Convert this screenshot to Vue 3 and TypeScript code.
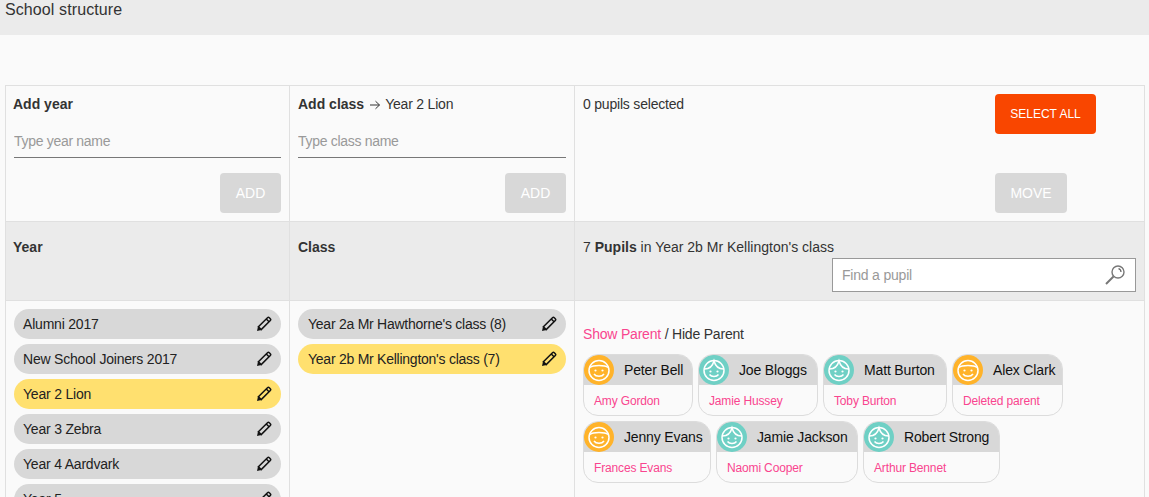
<script setup lang="ts">
const years = [
  { name: 'Alumni 2017' },
  { name: 'New School Joiners 2017' },
  { name: 'Year 2 Lion', active: true },
  { name: 'Year 3 Zebra' },
  { name: 'Year 4 Aardvark' },
  { name: 'Year 5' },
]
const classes = [
  { name: "Year 2a Mr Hawthorne's class (8)" },
  { name: "Year 2b Mr Kellington's class (7)", active: true },
]
const rows = [
  [
    { name: 'Peter Bell', parent: 'Amy Gordon', kind: 'boy', width: 110 },
    { name: 'Joe Bloggs', parent: 'Jamie Hussey', kind: 'girl', width: 120 },
    { name: 'Matt Burton', parent: 'Toby Burton', kind: 'girl', width: 124 },
    { name: 'Alex Clark', parent: 'Deleted parent', kind: 'boy', width: 111 },
  ],
  [
    { name: 'Jenny Evans', parent: 'Frances Evans', kind: 'boy', width: 128 },
    { name: 'Jamie Jackson', parent: 'Naomi Cooper', kind: 'girl', width: 142 },
    { name: 'Robert Strong', parent: 'Arthur Bennet', kind: 'girl', width: 137 },
  ],
]
</script>

<template>
  <div class="page">
    <header class="title">School structure</header>
    <section class="board">
      <div class="cell add">
        <div class="line"><b class="first-label">Add year</b></div>
        <input class="text-input" placeholder="Type year name" />
        <div class="actions"><button class="btn off">ADD</button></div>
      </div>
      <div class="cell add">
        <div class="line">
          <b>Add class</b>
          <svg class="arrow" viewBox="0 0 12 10" width="12" height="10"><path d="M1 5h9.500M6.500 1.200 10.500 5 6.500 8.800" fill="none" stroke="#333" stroke-width="1" /></svg>
          <span>Year 2 Lion</span>
        </div>
        <input class="text-input" placeholder="Type class name" />
        <div class="actions"><button class="btn off">ADD</button></div>
      </div>
      <div class="cell add move">
        <div class="line">0 pupils selected</div>
        <div class="move-buttons">
          <button class="btn select">SELECT ALL</button>
          <button class="btn off wide">MOVE</button>
        </div>
      </div>

      <div class="cell head"><b class="first-label">Year</b></div>
      <div class="cell head"><b>Class</b></div>
      <div class="cell head pupils-head">
        <div>7 <b>Pupils</b> in Year 2b Mr Kellington's class</div>
        <div class="search">
          <span>Find a pupil</span>
          <svg viewBox="0 0 22 22" width="22" height="22">
            <circle cx="14" cy="8" r="6" fill="none" stroke="#777" stroke-width="1.400" />
            <path d="M9.500 12.500 2 20" stroke="#777" stroke-width="2" fill="none" />
            <path d="M14.500 4.700a3.400 3.400 0 0 1 2.500 3.300" stroke="#666" stroke-width="1.200" fill="none" />
          </svg>
        </div>
      </div>

      <div class="cell list">
        <div v-for="y in years" :key="y.name" class="pill" :class="{ active: y.active }">
          <span>{{ y.name }}</span>
          <svg viewBox="0 0 16 16" width="16" height="16"><path d="M2.400 10.800 11.500 1.700a1.300 1.300 0 0 1 1.800 0l1 1a1.300 1.300 0 0 1 0 1.800L5.200 13.600ZM10.300 3l2.700 2.700" fill="none" stroke="#111" stroke-width="1.500" /><path d="M1 15 2 10.600 5.400 14Z" fill="#111" /></svg>
        </div>
      </div>
      <div class="cell list">
        <div v-for="c in classes" :key="c.name" class="pill class-pill" :class="{ active: c.active }">
          <span>{{ c.name }}</span>
          <svg viewBox="0 0 16 16" width="16" height="16"><path d="M2.400 10.800 11.500 1.700a1.300 1.300 0 0 1 1.800 0l1 1a1.300 1.300 0 0 1 0 1.800L5.200 13.600ZM10.300 3l2.700 2.700" fill="none" stroke="#111" stroke-width="1.500" /><path d="M1 15 2 10.600 5.400 14Z" fill="#111" /></svg>
        </div>
      </div>
      <div class="cell pupils">
        <div class="toggle"><a>Show Parent</a> / Hide Parent</div>
        <div v-for="(row, i) in rows" :key="i" class="card-row">
          <div v-for="p in row" :key="p.name" class="card" :style="{ width: p.width + 'px' }">
            <div class="card-top">
              <span class="avatar" :class="p.kind">
                <svg v-if="p.kind === 'boy'" viewBox="0 0 30 30" width="30" height="30">
                  <circle cx="15" cy="15.500" r="10" fill="none" stroke="#fff" stroke-width="1.500" />
                  <path d="M6 12.500c3-2.800 15-2.800 18 0" fill="none" stroke="#fff" stroke-width="1.500" />
                  <circle cx="11.500" cy="15.500" r="1.100" fill="#fff" /><circle cx="18.500" cy="15.500" r="1.100" fill="#fff" />
                  <path d="M10 19c2 3 8 3 10 0" fill="none" stroke="#fff" stroke-width="1.500" />
                </svg>
                <svg v-else viewBox="0 0 30 30" width="30" height="30">
                  <circle cx="15" cy="15.500" r="10" fill="none" stroke="#fff" stroke-width="1.500" />
                  <path d="M5.500 14c4.500 0 8-2.500 9.500-8 1.500 5.500 5 8 9.500 8" fill="none" stroke="#fff" stroke-width="1.500" />
                  <circle cx="11.500" cy="16.500" r="1.100" fill="#fff" /><circle cx="18.500" cy="16.500" r="1.100" fill="#fff" />
                  <path d="M10.500 19.500c2 2.800 7 2.800 9 0" fill="none" stroke="#fff" stroke-width="1.500" />
                </svg>
              </span>
              <span class="pupil-name">{{ p.name }}</span>
            </div>
            <div class="parent">{{ p.parent }}</div>
          </div>
        </div>
      </div>
    </section>
  </div>
</template>

<style>
html, body { margin: 0; overflow: hidden; background: #fafafa; }
</style>

<style scoped>
.page {
  height: 497px;
  overflow: hidden;
  background: #fafafa;
  color: #333;
  font: 14px "Liberation Sans", Arial, sans-serif;
  letter-spacing: -0.2px;
}
b { letter-spacing: 0; }
.first-label { margin-left: -1px; }
.title {
  height: 35px;
  box-sizing: border-box;
  padding: 0 5px;
  background: #ebebeb;
  font-size: 16px;
  line-height: 19px;
  letter-spacing: 0.1px;
}
.board {
  display: grid;
  grid-template-columns: 284px 285px 570px;
  grid-template-rows: 136px 79px auto;
  width: 1139px;
  margin: 50px 0 0 5px;
  border-top: 1px solid #e0e0e0;
  border-left: 1px solid #e0e0e0;
}
.cell {
  box-sizing: border-box;
  border-right: 1px solid #e0e0e0;
  border-bottom: 1px solid #e0e0e0;
  min-width: 0;
}
.add { padding: 10px 8px 0 8px; }
.line { display: flex; align-items: center; height: 17px; line-height: 17px; }
.arrow { margin: 0 4px 0 5px; }
.text-input {
  display: block;
  width: 100%;
  height: 32px;
  margin-top: 13px;
  padding: 0 0 2px;
  box-sizing: border-box;
  border: 0;
  border-bottom: 1px solid #777;
  background: transparent;
  font: 14px "Liberation Sans", Arial, sans-serif;
  letter-spacing: -0.3px;
  outline: none;
}
.text-input::placeholder { color: #999; opacity: 1; }
.actions { display: flex; justify-content: flex-end; margin-top: 15px; }
.btn {
  border: 0;
  border-radius: 4px;
  height: 40px;
  padding: 0;
  color: #fff;
  font: 14px "Liberation Sans", Arial, sans-serif;
  letter-spacing: 0;
}
.off { width: 61px; background: #d8d8d8; }
.wide { width: 72px; }
.select { width: 101px; background: #f94600; font-size: 12px; }
.move { position: relative; }
.move-buttons {
  position: absolute;
  left: 420px;
  top: 8px;
  display: flex;
  flex-direction: column;
  align-items: flex-start;
  gap: 39px;
}
.head { background: #ebebeb; padding: 17px 8px 0; line-height: 17px; letter-spacing: 0; }
.pupils-head { position: relative; }
.search {
  position: absolute;
  right: 8px;
  bottom: 8px;
  display: flex;
  align-items: center;
  justify-content: space-between;
  box-sizing: border-box;
  width: 304px;
  height: 34px;
  padding: 0 9px;
  background: #fff;
  border: 1px solid #999;
  color: #999;
  letter-spacing: -0.2px;
}
.list {
  padding: 8px 8px 0;
  display: flex;
  flex-direction: column;
  gap: 5px;
  border-bottom: 0;
}
.pill {
  flex: none;
  display: flex;
  align-items: center;
  justify-content: space-between;
  height: 30px;
  padding: 0 9px;
  border-radius: 15px;
  background: #d8d8d8;
  color: #222;
}
.class-pill { padding-left: 10px; letter-spacing: -0.25px; }
.pill.active { background: #ffe06f; }
.pupils { padding: 25px 8px 0; border-bottom: 0; }
.toggle { line-height: 17px; margin-bottom: 11px; }
.toggle a { color: #f9458f; }
.card-row { display: flex; gap: 5px; margin-bottom: 5px; }
.card {
  box-sizing: border-box;
  height: 62px;
  border: 1px solid #dcdcdc;
  border-radius: 15px;
  overflow: hidden;
  background: #fafafa;
}
.card-top {
  display: flex;
  align-items: center;
  height: 30px;
  background: #d8d8d8;
  color: #111;
}
.avatar { width: 30px; height: 30px; border-radius: 50%; flex: none; margin-right: 10px; }
.avatar svg { display: block; }
.avatar.boy { background: #ffb32a; }
.avatar.girl { background: #6fd0c5; }
.pupil-name { white-space: nowrap; letter-spacing: -0.15px; }
.parent { padding: 9px 0 0 10px; font-size: 12px; line-height: 14px; color: #f9458f; letter-spacing: -0.15px; }
</style>
